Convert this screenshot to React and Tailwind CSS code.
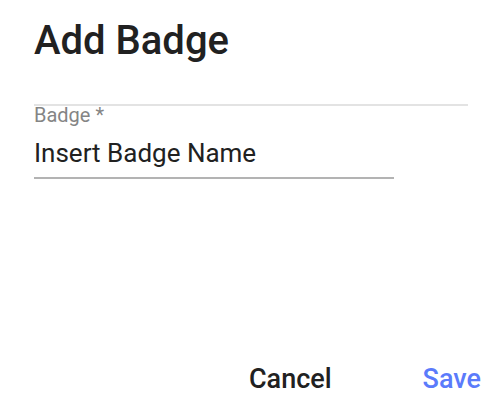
export default function App() {
  return (
    <div className="min-h-screen bg-white font-['Roboto',sans-serif] text-[#212121]">
      <div className="pl-[34px] pt-[21px]">
        <h1 className="text-[40px] leading-[40px] font-medium">Add Badge</h1>

        {/* badge field */}
        <div className="mt-[43px] h-[2px] w-[434px] bg-[#e3e3e3]" />
        <label className="block text-[20px] leading-[19px] text-[#858585]">Badge *</label>
        <div className="mt-[15px] text-[26px] leading-[26px]">Insert Badge Name</div>
        <div className="mt-[11px] h-[2px] w-[360px] bg-[#b3b3b3]" />
      </div>

      {/* actions */}
      <div className="mt-[187px] flex justify-end gap-[91px] pr-[19px]">
        <button className="text-[27px] leading-[27px] font-medium text-[#212121]">Cancel</button>
        <button className="text-[27px] leading-[27px] font-medium text-[#5b7bfb]">Save</button>
      </div>
    </div>
  );
}
